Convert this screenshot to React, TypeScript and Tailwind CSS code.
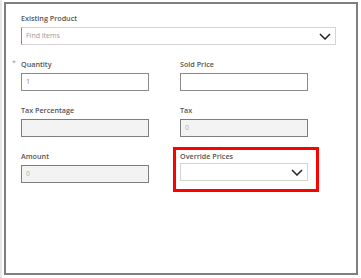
import React from 'react';

const Chevron = () => (
  <svg width="12" height="7" viewBox="0 0 12 7" className="shrink-0">
    <polyline points="1,1 6,6 11,1" fill="none" stroke="#222" strokeWidth="1.5" />
  </svg>
);

const Label = ({ children }: { children: React.ReactNode }) => (
  <div className="h-[12px] text-[7.2px] leading-[12px] font-semibold text-[#555]">{children}</div>
);

const TextBox = ({ value, disabled }: { value?: string; disabled?: boolean }) => (
  <div
    className={`mt-[3px] h-[18px] w-[128px] border px-[4px] text-[7px] leading-[16px] ${
      disabled ? 'border-[#7d7d7d] bg-[#f3f3f3] text-[#b0b0b0]' : 'border-[#8a8a8a] bg-white text-[#888]'
    }`}
  >
    {value}
  </div>
);

const App = () => {
  return (
    <div
      className="h-[278px] w-[361px] bg-white pl-[4px] pt-[2px] border-l-[2px] border-[#e8e8e8]"
      style={{ fontFamily: '"Open Sans", "Noto Sans", sans-serif' }}
    >
      <div className="relative -ml-[2px] h-[273px] w-[354px] border-2 border-[#7f7f7f] pl-[15px] pt-[8px]">
        <Label>Existing Product</Label>
        <div className="mt-[3px] flex h-[18px] w-[315px] items-center justify-between border border-[#d4d4d4] border-l-[#8a8a8a] pl-[4px] pr-[4px]">
          <span className="text-[7px] text-[#999]">Find items</span>
          <Chevron />
        </div>

        <div className="mt-[13px] grid grid-cols-[128px_128px] gap-x-[31px] gap-y-[13px]">
          <div className="relative">
            <span className="absolute -left-[9px] -top-[1px] text-[7px] leading-[12px] text-[#999]">*</span>
            <Label>Quantity</Label>
            <TextBox value="1" />
          </div>
          <div>
            <Label>Sold Price</Label>
            <TextBox />
          </div>
          <div>
            <Label>Tax Percentage</Label>
            <TextBox disabled />
          </div>
          <div>
            <Label>Tax</Label>
            <TextBox value="0" disabled />
          </div>
          <div>
            <Label>Amount</Label>
            <TextBox value="0" disabled />
          </div>
          <div className="-ml-[7px] -mr-[11px] -mt-[3px] border-[3px] border-[#ff0000] pb-[8px] pl-[4px] pr-[8px]">
            <Label>Override Prices</Label>
            <div className="mt-[1px] flex h-[18px] w-[128px] items-center justify-end border border-[#d4d4d4] pr-[4px]">
              <Chevron />
            </div>
          </div>
        </div>
      </div>
    </div>
  );
};

export default App;
